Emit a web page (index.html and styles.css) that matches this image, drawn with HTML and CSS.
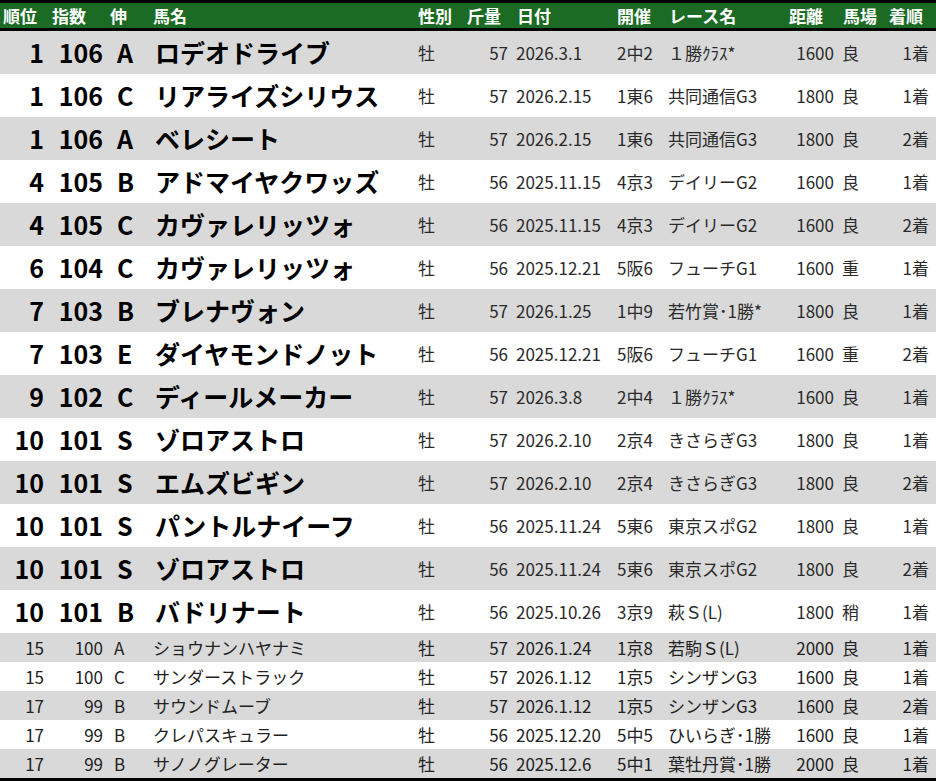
FILE: index.html
```html
<!DOCTYPE html>
<html lang="ja">
<head>
<meta charset="utf-8">
<link rel="stylesheet" href="styles.css">
</head>
<body>
<div class="table">
  <div class="row head">
    <div class="c c1">順位</div><div class="c c2">指数</div><div class="c c3">伸</div><div class="c c4">馬名</div><div class="c c5">性別</div><div class="c c6">斤量</div><div class="c c7">日付</div><div class="c c8">開催</div><div class="c c9">レース名</div><div class="c c10">距離</div><div class="c c11">馬場</div><div class="c c12">着順</div>
  </div>
  <div class="row big alt"><div class="c c1">1</div><div class="c c2">106</div><div class="c c3">A</div><div class="c c4">ロデオドライブ</div><div class="c c5">牡</div><div class="c c6">57</div><div class="c c7">2026.3.1</div><div class="c c8">2中2</div><div class="c c9">１勝ｸﾗｽ*</div><div class="c c10">1600</div><div class="c c11">良</div><div class="c c12">1着</div></div>
  <div class="row big"><div class="c c1">1</div><div class="c c2">106</div><div class="c c3">C</div><div class="c c4">リアライズシリウス</div><div class="c c5">牡</div><div class="c c6">57</div><div class="c c7">2026.2.15</div><div class="c c8">1東6</div><div class="c c9">共同通信G3</div><div class="c c10">1800</div><div class="c c11">良</div><div class="c c12">1着</div></div>
  <div class="row big alt"><div class="c c1">1</div><div class="c c2">106</div><div class="c c3">A</div><div class="c c4">ベレシート</div><div class="c c5">牡</div><div class="c c6">57</div><div class="c c7">2026.2.15</div><div class="c c8">1東6</div><div class="c c9">共同通信G3</div><div class="c c10">1800</div><div class="c c11">良</div><div class="c c12">2着</div></div>
  <div class="row big"><div class="c c1">4</div><div class="c c2">105</div><div class="c c3">B</div><div class="c c4">アドマイヤクワッズ</div><div class="c c5">牡</div><div class="c c6">56</div><div class="c c7">2025.11.15</div><div class="c c8">4京3</div><div class="c c9">デイリーG2</div><div class="c c10">1600</div><div class="c c11">良</div><div class="c c12">1着</div></div>
  <div class="row big alt"><div class="c c1">4</div><div class="c c2">105</div><div class="c c3">C</div><div class="c c4">カヴァレリッツォ</div><div class="c c5">牡</div><div class="c c6">56</div><div class="c c7">2025.11.15</div><div class="c c8">4京3</div><div class="c c9">デイリーG2</div><div class="c c10">1600</div><div class="c c11">良</div><div class="c c12">2着</div></div>
  <div class="row big"><div class="c c1">6</div><div class="c c2">104</div><div class="c c3">C</div><div class="c c4">カヴァレリッツォ</div><div class="c c5">牡</div><div class="c c6">56</div><div class="c c7">2025.12.21</div><div class="c c8">5阪6</div><div class="c c9">フューチG1</div><div class="c c10">1600</div><div class="c c11">重</div><div class="c c12">1着</div></div>
  <div class="row big alt"><div class="c c1">7</div><div class="c c2">103</div><div class="c c3">B</div><div class="c c4">ブレナヴォン</div><div class="c c5">牡</div><div class="c c6">57</div><div class="c c7">2026.1.25</div><div class="c c8">1中9</div><div class="c c9">若竹賞･1勝*</div><div class="c c10">1800</div><div class="c c11">良</div><div class="c c12">1着</div></div>
  <div class="row big"><div class="c c1">7</div><div class="c c2">103</div><div class="c c3">E</div><div class="c c4">ダイヤモンドノット</div><div class="c c5">牡</div><div class="c c6">56</div><div class="c c7">2025.12.21</div><div class="c c8">5阪6</div><div class="c c9">フューチG1</div><div class="c c10">1600</div><div class="c c11">重</div><div class="c c12">2着</div></div>
  <div class="row big alt"><div class="c c1">9</div><div class="c c2">102</div><div class="c c3">C</div><div class="c c4">ディールメーカー</div><div class="c c5">牡</div><div class="c c6">57</div><div class="c c7">2026.3.8</div><div class="c c8">2中4</div><div class="c c9">１勝ｸﾗｽ*</div><div class="c c10">1600</div><div class="c c11">良</div><div class="c c12">1着</div></div>
  <div class="row big"><div class="c c1">10</div><div class="c c2">101</div><div class="c c3">S</div><div class="c c4">ゾロアストロ</div><div class="c c5">牡</div><div class="c c6">57</div><div class="c c7">2026.2.10</div><div class="c c8">2京4</div><div class="c c9">きさらぎG3</div><div class="c c10">1800</div><div class="c c11">良</div><div class="c c12">1着</div></div>
  <div class="row big alt"><div class="c c1">10</div><div class="c c2">101</div><div class="c c3">S</div><div class="c c4">エムズビギン</div><div class="c c5">牡</div><div class="c c6">57</div><div class="c c7">2026.2.10</div><div class="c c8">2京4</div><div class="c c9">きさらぎG3</div><div class="c c10">1800</div><div class="c c11">良</div><div class="c c12">2着</div></div>
  <div class="row big"><div class="c c1">10</div><div class="c c2">101</div><div class="c c3">S</div><div class="c c4">パントルナイーフ</div><div class="c c5">牡</div><div class="c c6">56</div><div class="c c7">2025.11.24</div><div class="c c8">5東6</div><div class="c c9">東京スポG2</div><div class="c c10">1800</div><div class="c c11">良</div><div class="c c12">1着</div></div>
  <div class="row big alt"><div class="c c1">10</div><div class="c c2">101</div><div class="c c3">S</div><div class="c c4">ゾロアストロ</div><div class="c c5">牡</div><div class="c c6">56</div><div class="c c7">2025.11.24</div><div class="c c8">5東6</div><div class="c c9">東京スポG2</div><div class="c c10">1800</div><div class="c c11">良</div><div class="c c12">2着</div></div>
  <div class="row big"><div class="c c1">10</div><div class="c c2">101</div><div class="c c3">B</div><div class="c c4">バドリナート</div><div class="c c5">牡</div><div class="c c6">56</div><div class="c c7">2025.10.26</div><div class="c c8">3京9</div><div class="c c9">萩Ｓ(L)</div><div class="c c10">1800</div><div class="c c11">稍</div><div class="c c12">1着</div></div>
  <div class="row small alt"><div class="c c1">15</div><div class="c c2">100</div><div class="c c3">A</div><div class="c c4">ショウナンハヤナミ</div><div class="c c5">牡</div><div class="c c6">57</div><div class="c c7">2026.1.24</div><div class="c c8">1京8</div><div class="c c9">若駒Ｓ(L)</div><div class="c c10">2000</div><div class="c c11">良</div><div class="c c12">1着</div></div>
  <div class="row small"><div class="c c1">15</div><div class="c c2">100</div><div class="c c3">C</div><div class="c c4">サンダーストラック</div><div class="c c5">牡</div><div class="c c6">57</div><div class="c c7">2026.1.12</div><div class="c c8">1京5</div><div class="c c9">シンザンG3</div><div class="c c10">1600</div><div class="c c11">良</div><div class="c c12">1着</div></div>
  <div class="row small alt"><div class="c c1">17</div><div class="c c2">99</div><div class="c c3">B</div><div class="c c4">サウンドムーブ</div><div class="c c5">牡</div><div class="c c6">57</div><div class="c c7">2026.1.12</div><div class="c c8">1京5</div><div class="c c9">シンザンG3</div><div class="c c10">1600</div><div class="c c11">良</div><div class="c c12">2着</div></div>
  <div class="row small"><div class="c c1">17</div><div class="c c2">99</div><div class="c c3">B</div><div class="c c4">クレパスキュラー</div><div class="c c5">牡</div><div class="c c6">56</div><div class="c c7">2025.12.20</div><div class="c c8">5中5</div><div class="c c9">ひいらぎ･1勝</div><div class="c c10">1600</div><div class="c c11">良</div><div class="c c12">1着</div></div>
  <div class="row small alt"><div class="c c1">17</div><div class="c c2">99</div><div class="c c3">B</div><div class="c c4">サノノグレーター</div><div class="c c5">牡</div><div class="c c6">56</div><div class="c c7">2025.12.6</div><div class="c c8">5中1</div><div class="c c9">葉牡丹賞･1勝</div><div class="c c10">2000</div><div class="c c11">良</div><div class="c c12">1着</div></div>
</div>
</body>
</html>
```
FILE: styles.css
```css
html, body {
  margin: 0;
  padding: 0;
  background: #ffffff;
}
body {
  font-family: "Noto Sans CJK JP", "Noto Sans", sans-serif;
  color: #222;
}
.table {
  width: 936px;
  border-top: 3px solid #000;
  border-bottom: 4px solid #000;
}
.row {
  display: grid;
  grid-template-columns: 48px 58px 44px 265px 45px 52px 100px 52px 121px 53px 46px 52px;
  align-items: center;
  white-space: nowrap;
}
.c {
  overflow: visible;
  line-height: 1;
}
.head {
  height: 25px;
  background: #1b6b25;
  color: #fff;
  font-weight: bold;
  font-size: 17px;
  border-bottom: 3px solid #000;
}
.head .c { text-align: left; }
.head .c1 { padding-left: 3px; }
.head .c2 { padding-left: 4px; }
.head .c3 { padding-left: 4px; }
.head .c4 { padding-left: 3px; }
.head .c5 { padding-left: 3px; }
.head .c6 { padding-left: 7px; }
.head .c7 { padding-left: 5px; }
.head .c8 { padding-left: 5px; }
.head .c9 { padding-left: 5px; }
.head .c10 { padding-left: 4px; }
.head .c11 { padding-left: 5px; }
.head .c12 { padding-left: 5px; }

.big { height: 43px; font-size: 17px; color: #2a2a2a; }
.small { height: 29px; font-size: 17px; color: #222; }
.alt { background: #d9d9d9; }

.c1, .c2, .c6, .c10, .c12 { text-align: right; }
.c1 { padding-right: 4px; }
.c2 { padding-right: 3px; }
.c6 { padding-right: 4px; }
.c10 { padding-right: 4px; }
.c12 { padding-right: 7px; }
.c7 { padding-left: 4px; }
.c8 { padding-left: 5px; }
.c9 { padding-left: 4px; }
.c11 { padding-left: 4px; }
.c5 { padding-left: 3px; }

.big .c1, .big .c2, .big .c3, .big .c4 {
  font-size: 25px;
  font-weight: bold;
  color: #000;
}
.big .c3 { padding-left: 11px; }
.big .c4 { padding-left: 5px; }
.small .c3 { padding-left: 8px; }
.small .c4 { padding-left: 3px; }
```
